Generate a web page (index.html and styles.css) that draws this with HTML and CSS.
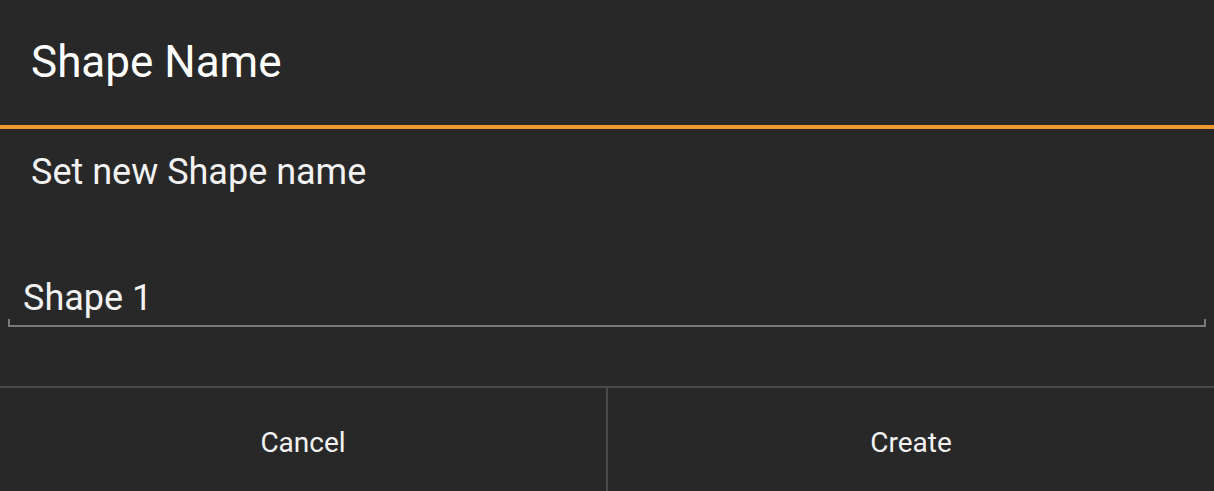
FILE: index.html
```html
<!DOCTYPE html>
<html>
<head>
<meta charset="utf-8">
<link rel="stylesheet" href="styles.css">
</head>
<body>
<div class="dialog">
  <div class="header"><h1 class="title">Shape Name</h1></div>
  <div class="accent"></div>
  <div class="content">
    <p class="message">Set new Shape name</p>
    <div class="field">
      <span class="value">Shape 1</span>
      <div class="underline"></div>
    </div>
  </div>
  <div class="buttons">
    <button class="btn">Cancel</button>
    <button class="btn btn-right">Create</button>
  </div>
</div>
</body>
</html>
```
FILE: styles.css
```css
html, body {
  margin: 0;
  padding: 0;
  background: #282828;
  width: 1214px;
  height: 491px;
  overflow: hidden;
  font-family: Roboto, "Noto Sans", sans-serif;
  color: #f2f2f2;
}
.dialog {
  display: flex;
  flex-direction: column;
  height: 491px;
}
.header {
  height: 125px;
  display: flex;
  align-items: center;
  padding-left: 31px;
}
.title {
  margin: 0;
  font-weight: 400;
  font-size: 44px;
  color: #ffffff;
  padding-bottom: 2px;
}
.accent {
  height: 4px;
  background: #ea9a2c;
}
.content {
  height: 257px;
  display: flex;
  flex-direction: column;
}
.message {
  margin: 23px 0 0 31px;
  font-size: 36px;
  line-height: 40px;
}
.field {
  margin: 86px 8px 0 8px;
}
.value {
  display: block;
  font-size: 36px;
  line-height: 40px;
  padding-left: 15px;
}
.underline {
  margin-top: 1px;
  height: 6px;
  border: 2px solid #7a7a7a;
  border-top: none;
}
.buttons {
  flex: 1;
  display: flex;
  border-top: 2px solid #4a4a4a;
}
.btn {
  flex: 1;
  background: transparent;
  border: none;
  color: #f2f2f2;
  font-family: Roboto, "Noto Sans", sans-serif;
  font-size: 28px;
  padding: 6px 0 0 0;
}
.btn-right {
  border-left: 2px solid #4a4a4a;
}
```
